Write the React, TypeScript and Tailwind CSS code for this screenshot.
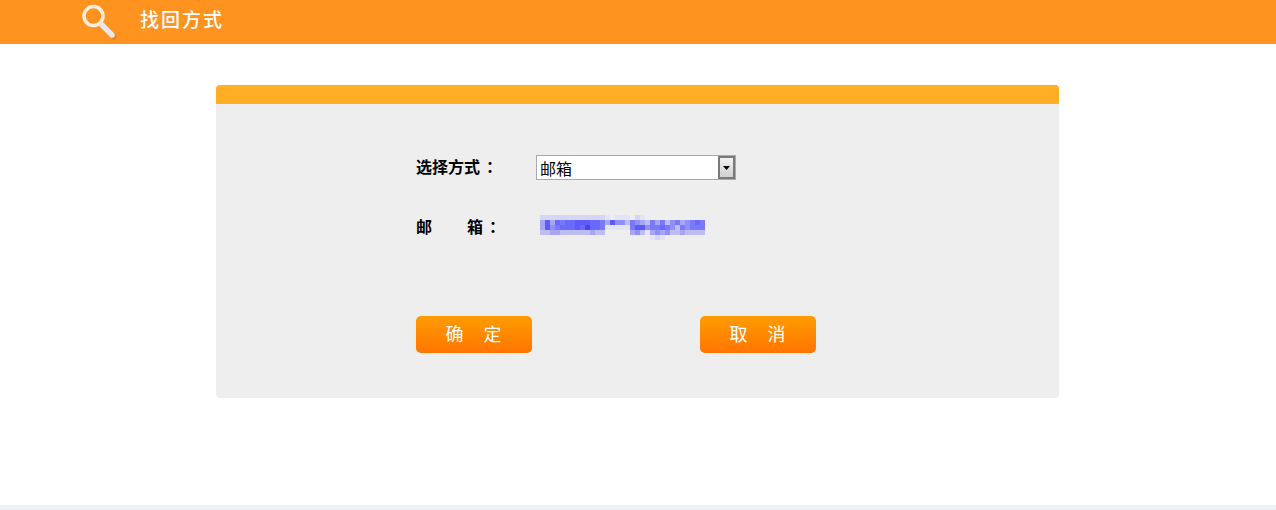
const mosaicRows = [
  "22222222222221 111 21",
  "484767788877648553654364635645676",
  "485677787977611111688566765365666",
  "3344333333433     453145453343333",
  "                      121",
];

const shadeMap: Record<string, string> = {
  "1": "#e4e4f4",
  "2": "#d6d6f4",
  "3": "#bdbdf4",
  "4": "#a6a6f5",
  "5": "#9090f6",
  "6": "#7a7af8",
  "7": "#6a6afa",
  "8": "#5c5cfc",
  "9": "#4444fe",
};

function Mosaic() {
  return (
    <svg width="165" height="25" viewBox="0 0 165 25" shapeRendering="crispEdges">
      {mosaicRows.map((row, y) =>
        row
          .slice(0, 33)
          .split("")
          .map((c, x) =>
            c === " " ? null : (
              <rect key={`${x}-${y}`} x={x * 5} y={y * 5} width="5" height="5" fill={shadeMap[c]} />
            ),
          ),
      )}
    </svg>
  );
}

function SearchIcon() {
  return (
    <svg width="38" height="40" viewBox="0 0 38 40" fill="none">
      <line x1="23" y1="25" x2="33" y2="35" stroke="#d98028" strokeWidth="6" strokeLinecap="round" opacity="0.6" />
      <circle cx="12.5" cy="14" r="9.5" stroke="#fdeedd" strokeWidth="3.5" />
      <line x1="20" y1="22" x2="31" y2="33" stroke="#e8e8e8" strokeWidth="5.5" strokeLinecap="round" />
    </svg>
  );
}

function OrangeButton({ label }: { label: string }) {
  return (
    <button className="flex h-[37px] w-[116px] items-center justify-center rounded-[5px] bg-gradient-to-b from-[#ff9c00] to-[#ff7400] pb-[3px] text-[18px] tracking-[1px] text-white">
      {label}
    </button>
  );
}

function Colon() {
  return <span className="ml-[2px] [font-family:'Noto_Sans_CJK_TC',sans-serif]">：</span>;
}

export default function App() {
  return (
    <div className="flex min-h-[510px] flex-col bg-white [font-family:'Noto_Sans_CJK_SC',sans-serif]">
      <header className="flex h-11 items-center bg-[#ff9320] pl-[81px]">
        <SearchIcon />
        <h1 className="ml-[21px] pb-[6px] text-[19px] font-medium tracking-[2px] text-white">找回方式</h1>
      </header>

      <main className="ml-[216px] mt-[41px] w-[843px] overflow-hidden rounded-[4px] bg-[#eeeeee]">
        <div className="h-[19px] bg-[#ffae26]" />
        <div className="h-[294px] pl-[200px] pt-[51px]">
          <div className="flex h-[25px] items-center">
            <label className="w-[120px] pb-[4px] text-[16px] font-bold text-black">
              选择方式
              <Colon />
            </label>
            <div className="relative h-[25px] w-[200px]">
              <select className="h-full w-full appearance-none rounded-none border border-[#a9a9a9] bg-white pl-[3px] text-[16px] text-black outline-none">
                <option>邮箱</option>
              </select>
              <div className="pointer-events-none absolute right-px top-px flex h-[23px] w-[17px] items-center justify-center border-2 border-[#7a7a7a] bg-gradient-to-b from-[#f2f2f2] to-[#d0d0d0]">
                <svg width="7" height="4" viewBox="0 0 7 4">
                  <path d="M0 0h7L3.5 4z" fill="#000" />
                </svg>
              </div>
            </div>
          </div>

          <div className="mt-[35px] flex h-[25px] items-center">
            <label className="flex w-[85px] justify-between pb-[4px] text-[16px] font-bold text-black">
              <span>邮</span>
              <span>
                箱
                <Colon />
              </span>
            </label>
            <div className="ml-[39px]">
              <Mosaic />
            </div>
          </div>

          <div className="mt-[76px] flex gap-[168px]">
            <OrangeButton label="确　定" />
            <OrangeButton label="取　消" />
          </div>
        </div>
      </main>

      <footer className="mt-auto h-[5px] bg-[#edf2f7]" />
    </div>
  );
}
